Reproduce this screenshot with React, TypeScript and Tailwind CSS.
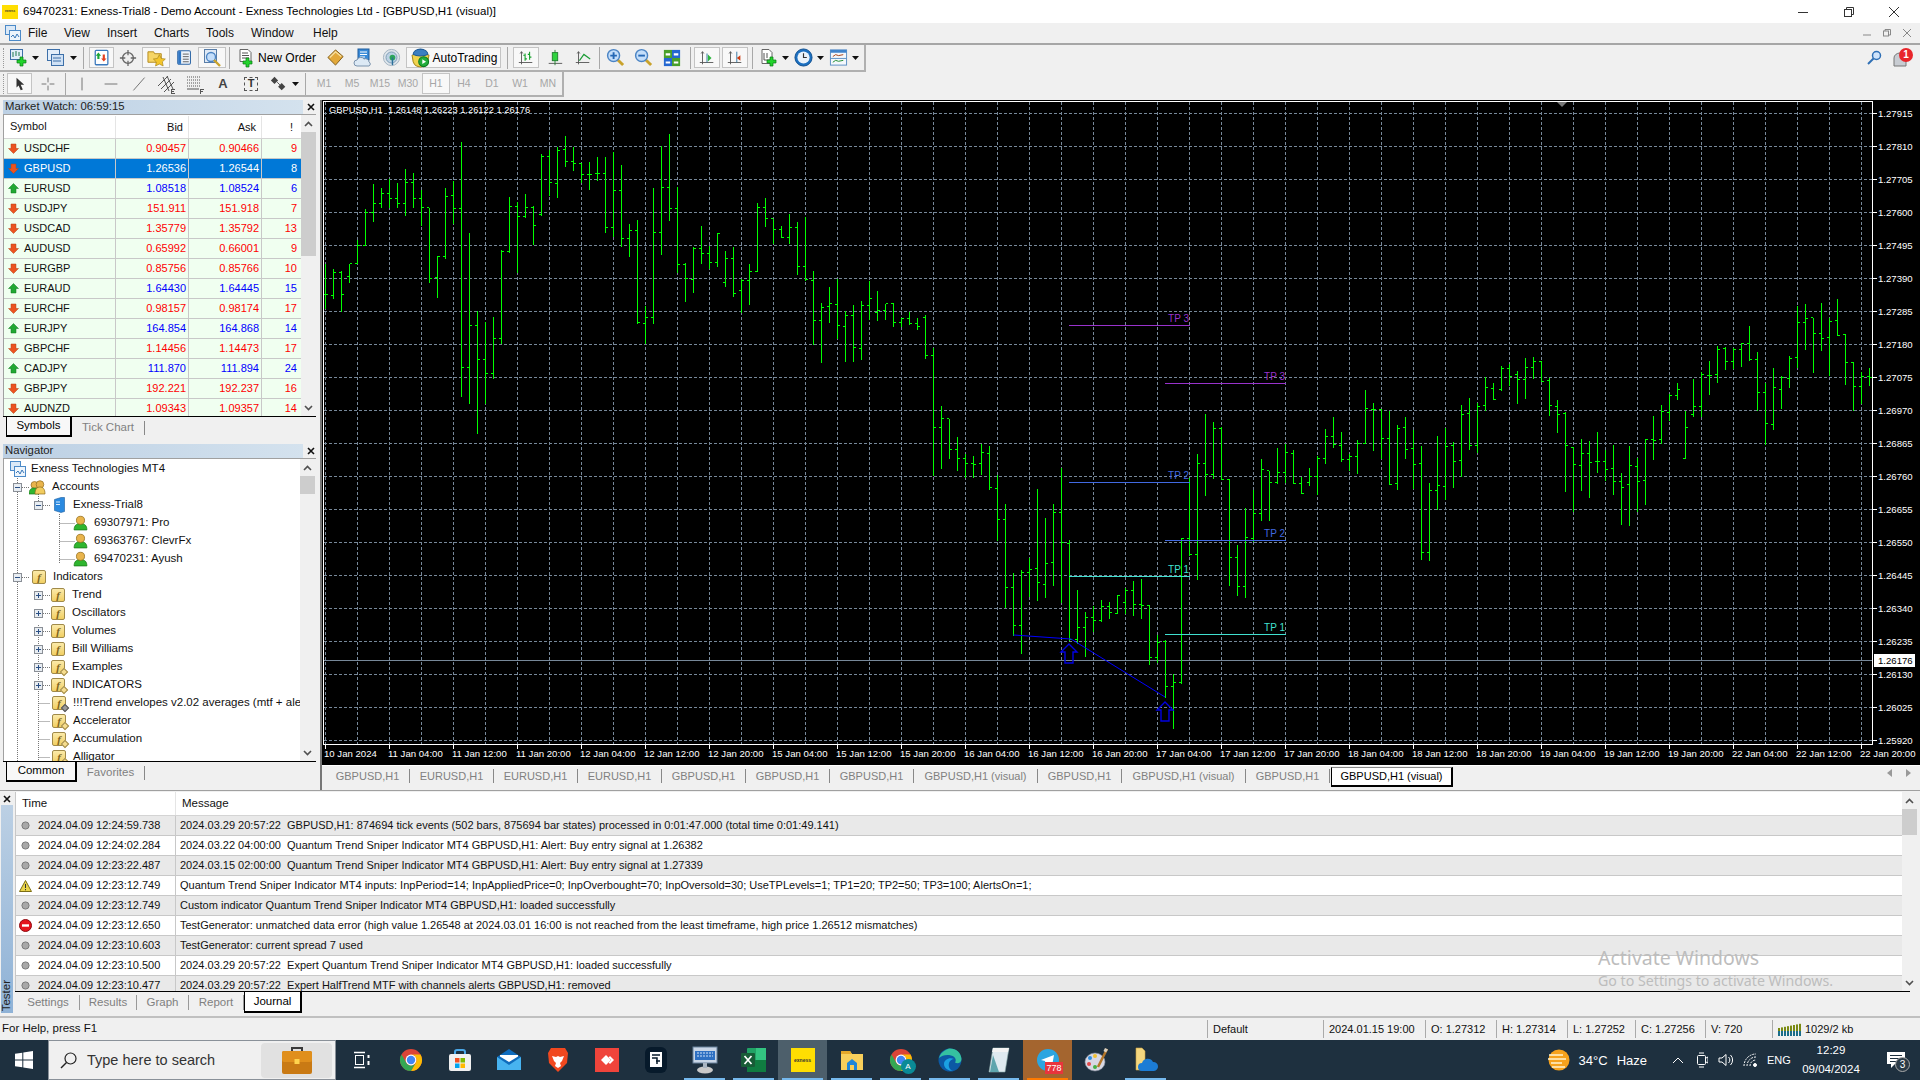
import React from "react";

type N = number[];
const seg1: N[] = [[520,655,612,612],[535,625,615,545],[540,662,545,612],[518,575,558,518],[448,520,518,466],[355,466,466,365],[280,392,365,338],[292,350,338,308],[265,350,310,325],[276,352,325,338],[235,376,340,277],[247,352,277,325],[298,404,325,352],[350,575,350,565],[496,620,562,498],[292,505,498,318],[270,400,316,355],[153,917,355,832],[427,938,832,705],[660,1030,705,807],[694,940,807,850],[678,865,848,745],[478,760,745,483],[318,485,483,347],[333,545,347,378],[310,382,378,350],[345,462,350,406],[190,375,372,197],[178,315,197,275],[168,320,280,180],[135,228,178,214],[168,240,214,220],[215,275,220,253],[213,297,253,253],[198,270,250,250],[198,425,248,410],[183,437,410,300],[222,468,300,445],[400,497,445,420],[388,700,420,697],[645,760,700,680],[292,700,680,427],[166,492,427,290],[130,390,290,355],[287,545,355,523],[515,632,523,565],[467,605,567,475],[405,518,475,490],[465,533,490,515],[425,528,515,430],[480,587,575,505],[468,618,505,610],[565,667,600,570],[520,642,570,543],[337,543,543,350],[320,408,350,385],[385,458,385,417],[405,442,417,440],[368,458,440,412],[393,552,412,527],[377,570,527,567],[541,763,570,690],[636,815,690,650],[588,695,648,640],[565,743,642,705],[660,813,708,675],[643,813,675,772],[630,808,775,645],[570,688,645,625],[600,690,665,660],[640,687,660,640],[637,708,640,695],[680,708,695,685],[664,702,685,698],[682,718,700,708],[672,803,680,795],[772,1155,795,1010],[945,1135,1012,985],[985,1103,985,1078],[1038,1140,1078,1105],[1090,1160,1105,1120],[1095,1160,1120,1123],[1060,1152,1120,1085],[1066,1198,1090,1190],[1152,1350,1195,1287]];
const seg2: N[] = [[610,920,658,862],[817,1005,862,975],[808,1060,975,815],[772,887,815,808],[565,900,805,847],[652,890,853,790],[610,855,787,635],[502,905,635,727],[718,1020,730,1018],[868,1030,1018,980],[932,1067,980,952],[915,993,952,960],[898,962,960,918],[903,953,918,935],[882,938,938,885],[862,940,905,870],[840,945,870,912],[835,953,912,915],[912,1093,915,1070],[1002,1085,1070,1025],[1018,1190,1022,1157],[1118,1283,1157,1147],[710,1148,1147,715],[530,765,715,762],[460,838,762,488],[340,585,488,522],[363,533,522,384],[378,538,384,537],[535,855,537,772],[733,885,772,857],[622,890,857,710],[568,722,714,640],[475,660,640,508],[510,660,510,547],[442,548,547,515],[430,545,515,455],[447,548,458,548],[528,580,548,580],[502,555,545,527],[465,582,527,475],[385,488,475,407],[348,440,407,432],[393,482,435,477],[460,510,477,468],[418,518,468,428],[267,430,428,325],[305,450,328,328],[323,473,328,415],[330,553,415,552],[372,567,550,384]];
const seg3: N[] = [[348,473,382,448],[388,563,445,492],[435,777,490,757],[546,780,757,570],[405,628,571,555],[380,598,558,438],[423,560,436,484],[312,528,481,343],[292,446,340,436],[307,455,436,318],[228,330,316,262],[246,298,265,298],[195,270,266,205],[190,255,203,227],[210,308,223,238],[170,293,238,202],[168,233,202,184],[180,244,184,242],[232,345,240,316],[297,395,318,343],[333,573,338,436],[437,634,440,493],[414,569,496,460],[420,590,460,487],[393,515,484,484],[448,540,484,508],[432,581,505,544],[517,671,544,560],[435,675,553,496],[470,634,498,544],[414,611,541,418],[345,476,418,421],[312,429,418,334],[280,361,337,286],[247,298,286,268],[331,475,475,382],[234,347,341,319],[214,347,317,223],[181,281,225,226],[136,245,223,148]];
const seg4: N[] = [[198,267,205,243],[202,263,243,207],[187,257,207,190],[135,240,190,238],[213,390,238,337],[306,492,337,430],[262,448,432,322],[285,383,327,292],[226,320,295,234],[75,262,232,127],[70,208,127,115],[112,275,112,160],[67,210,160,175],[112,285,172,124],[55,166,120,165],[160,312,162,247],[243,390,247,319],[272,370,319,289],[262,315,287,290]];

const toBars = (s: N[], o: number) => s.map((b) => b.map((v) => o + v / 3));
const bars = [...toBars(seg1, 90), ...toBars(seg2, 300), ...toBars(seg3, 300), ...toBars(seg4, 280)];
const px = (v: number) => Math.round(v) + 0.5;
const barPath = bars
  .map((b, i) => {
    const n = Math.round(325.4 + 8 * i);
    const x = n + 0.5;
    return `M${x} ${px(b[0])}V${px(b[1])}M${n - 2} ${px(b[2])}H${n}M${n + 1} ${px(b[3])}H${n + 3}`;
  })
  .join("");
const hLevels = Array.from({ length: 20 }, (_, i) => ({ y: px(113.3 + 33 * i), t: (1.27915 - 0.00105 * i).toFixed(5) }));
const vGrid = Array.from({ length: 49 }, (_, i) => 325.5 + 32 * i);
const timeLabels = ["10 Jan 2024","11 Jan 04:00","11 Jan 12:00","11 Jan 20:00","12 Jan 04:00","12 Jan 12:00","12 Jan 20:00","15 Jan 04:00","15 Jan 12:00","15 Jan 20:00","16 Jan 04:00","16 Jan 12:00","16 Jan 20:00","17 Jan 04:00","17 Jan 12:00","17 Jan 20:00","18 Jan 04:00","18 Jan 12:00","18 Jan 20:00","19 Jan 04:00","19 Jan 12:00","19 Jan 20:00","22 Jan 04:00","22 Jan 12:00","22 Jan 20:00"];

const arrow = (x: number, y: number) => `${x},${y} ${x + 8},${y + 8} ${x + 4},${y + 8} ${x + 4},${y + 19} ${x - 4},${y + 19} ${x - 4},${y + 8} ${x - 8},${y + 8}`;

function Chart() {
  const tp = [
    { x1: 1069, x2: 1190, items: [[325, "#9932cc", "TP 3"], [482, "#4169e1", "TP 2"], [576, "#40e0d0", "TP 1"]] },
    { x1: 1165, x2: 1286, items: [[383, "#9932cc", "TP 3"], [540, "#4169e1", "TP 2"], [634, "#40e0d0", "TP 1"]] },
  ] as { x1: number; x2: number; items: [number, string, string][] }[];
  return (
    <svg width={1598} height={665} viewBox="322 100 1598 665" className="block bg-black font-['Liberation_Sans',sans-serif]">
      <g stroke="#778899" strokeDasharray="3 2" shapeRendering="crispEdges">
        {hLevels.map((l) => <path key={l.y} d={`M324 ${l.y}H1873`} />)}
        {vGrid.map((x) => <path key={x} d={`M${x} 102V744`} />)}
      </g>
      <path d="M324 660.5H1873" stroke="#778899" shapeRendering="crispEdges" />
      <path d={barPath} stroke="#00ff00" fill="none" shapeRendering="crispEdges" />
      {tp.map((g) => g.items.map(([y, c, t]) => (
        <g key={`${g.x1}${y}`}>
          <path d={`M${g.x1} ${y + 0.5}H${g.x2}`} stroke={c} shapeRendering="crispEdges" />
          <text x={g.x2 - 1} y={y - 3} textAnchor="end" fontSize="10" fill={c}>{t}</text>
        </g>
      )))}
      <path d="M1013.5 635L1071 639L1165 697" stroke="#0000ff" fill="none" strokeWidth="1" />
      <polygon points={arrow(1069, 644)} fill="none" stroke="#0000e0" strokeWidth="1.4" />
      <polygon points={arrow(1165, 702)} fill="none" stroke="#0000e0" strokeWidth="1.4" />
      <rect x="323.5" y="101.5" width="1549" height="643" fill="none" stroke="#fff" shapeRendering="crispEdges" />
      <text x="329" y="113" fontSize="9.3" fill="#fff" xmlSpace="preserve">GBPUSD,H1  1.26148 1.26223 1.26122 1.26176</text>
      <polygon points="1557,102 1567,102 1562,107" fill="#777" />
      {hLevels.map((l) => (
        <g key={l.t}>
          <path d={`M1873 ${l.y}H1877`} stroke="#fff" shapeRendering="crispEdges" />
          <text x="1878" y={l.y + 3.5} fontSize="9.6" fill="#fff">{l.t}</text>
        </g>
      ))}
      <rect x="1874" y="654" width="41" height="13" fill="#fff" />
      <text x="1878" y="664" fontSize="9.6" fill="#000">1.26176</text>
      {timeLabels.map((t, i) => (
        <g key={t}>
          <path d={`M${1861.5 - 64 * (24 - i)} 745V749`} stroke="#fff" shapeRendering="crispEdges" />
          <text x={1860 - 64 * (24 - i)} y="757" fontSize="9.6" fill="#fff">{t}</text>
        </g>
      ))}
    </svg>
  );
}

type P = { children?: React.ReactNode; w?: number; h?: number; vb?: string; className?: string };
const S = ({ children, w = 18, h = 18, vb = "0 0 20 20", className }: P) => (
  <svg width={w} height={h} viewBox={vb} className={className}>{children}</svg>
);
const Plus = ({ x, y }: { x: number; y: number }) => (
  <path transform={`translate(${x} ${y})`} d="M3 0h3v3h3v3H6v3H3V6H0V3h3z" fill="#22d32c" stroke="#0a7a14" strokeWidth=".7" />
);
const Axes = () => <path d="M5 3v14M2 15h15M3.5 5L5 3l1.5 2" stroke="#555" fill="none" />;
const Lens = ({ c }: { c: string }) => (
  <>
    <path d="M12 12l6 6" stroke="#c9a22b" strokeWidth="3" />
    <circle cx="8" cy="8" r="6.3" fill="#c4defa" stroke="#4b84c4" strokeWidth="1.5" />
    <path d={c} stroke="#2568b5" strokeWidth="2" />
  </>
);

const Ic = {
  NewChart: () => <S w={20} h={20}><rect x="1.5" y="1.5" width="12" height="10" fill="#e3eefa" stroke="#3d6fa8" /><path d="M4 4v5M7 3v5M10 4v4" stroke="#1d7a4d" /><Plus x={8} y={9} /></S>,
  Profiles: () => <S w={20} h={20}><rect x="1.5" y="1.5" width="12" height="11" fill="#e3eefa" stroke="#3d6fa8" /><rect x="5.5" y="6.5" width="12" height="11" fill="#cfe1f5" stroke="#3d6fa8" /><path d="M7 10h8M7 13h8" stroke="#3d6fa8" /></S>,
  Market: () => <S w={18} h={18}><rect x="2.5" y="1.5" width="14" height="16" rx="1" fill="#fff" stroke="#3b79bd" strokeWidth="1.4" /><path d="M6 4l3 3.5H7.2V11H4.8V7.5H3z" fill="#1aa53a" /><path d="M12 14l-3-3.5h1.8V6h2.4v4.5H15z" fill="#e4401f" /></S>,
  Data: () => <S w={18} h={18}><circle cx="10" cy="10" r="6" fill="none" stroke="#666" strokeWidth="1.5" /><path d="M10 1v6M10 13v6M1 10h6M13 10h6" stroke="#666" strokeWidth="1.4" /></S>,
  Nav: () => <S w={19} h={19}><path d="M1 4h6l1 2h7v9H1z" fill="#f6d565" stroke="#b38a1e" /><path d="M13 7l2 4 4.3.6-3.1 3 .8 4.3-4-2-4 2 .8-4.3-3.1-3 4.3-.6z" fill="#f3c52b" stroke="#a8841a" strokeWidth=".7" /></S>,
  Term: () => <S w={17} h={17}><rect x="2" y="2" width="15" height="16" rx="1.5" fill="#eef4fb" stroke="#2d66a6" strokeWidth="1.2" /><rect x="2.5" y="2.5" width="3.5" height="15" fill="#2f76c4" /><path d="M8 6h7M8 9h7M8 12h7M8 15h7" stroke="#4a4a4a" /></S>,
  Tester: () => <S w={20} h={20}><rect x="2.5" y="1.5" width="12" height="13" fill="#dfe9f5" stroke="#5a7ea8" /><circle cx="9" cy="9" r="4.5" fill="#c4defa" stroke="#4b84c4" strokeWidth="1.3" /><path d="M12 12l6 6" stroke="#c9a22b" strokeWidth="2.4" /></S>,
  Order: () => <S w={20} h={20} className="shrink-0"><path d="M3 1.5h8l3 3v9H3z" fill="#fff" stroke="#666" /><path d="M5 5h6M5 7.5h7M5 10h7" stroke="#555" /><Plus x={6} y={10} /></S>,
  Book: () => <S w={19} h={19}><path d="M2 10L10 2l8 7-8 9z" fill="#e2a83a" stroke="#7c5a17" /><path d="M4 10l6-6 6 5" fill="none" stroke="#f8e1a2" strokeWidth="1.4" /></S>,
  Editor: () => <S w={20} h={20}><rect x="5" y="1" width="11" height="11" fill="#3a8bd8" stroke="#1f5c9c" /><path d="M7 4h7M7 6.5h7M7 9h5" stroke="#fff" /><path d="M4 18a3 3 0 0 1 0-6 4 4 0 0 1 7-1 3.5 3.5 0 0 1 5 3 2.2 2.2 0 0 1 0 4z" fill="#dce9f5" stroke="#7b93ad" /></S>,
  Signal: () => <S w={19} h={19}><circle cx="10" cy="10" r="8.5" fill="#dfe6ec" stroke="#9fb0bf" /><circle cx="10" cy="10" r="5.8" fill="#bcd2e4" stroke="#7c9ab3" /><circle cx="11" cy="10" r="3" fill="#2ca45a" /><path d="M11 10v8" stroke="#2a6f99" strokeWidth="1.5" /></S>,
  Auto: () => <S w={21} h={21}><path d="M2 8l8-4 8 4-1 6c-1 3-4 5-7 5s-6-2-7-5z" fill="#f0d34e" stroke="#a98a1c" /><path d="M3 7a7 5 0 0 1 14 0c-3 2-11 2-14 0z" fill="#3c7fc1" stroke="#1f5b96" /><circle cx="13" cy="14" r="4.7" fill="#23ad3c" stroke="#0d7b21" /><path d="M11.7 11.7l3.6 2.3-3.6 2.3z" fill="#fff" /></S>,
  Bars: () => <S w={18} h={18}><Axes /><path d="M9 5v8M7 7h2M9 11h2M14 3v9M12 6h2M14 9h2" stroke="#14a02a" strokeWidth="1.2" fill="none" /></S>,
  Candle: () => <S w={18} h={18}><path d="M3 16h15" stroke="#555" /><path d="M10 1v17" stroke="#1f7e2c" /><rect x="7" y="4" width="6" height="9" fill="#2fd33e" stroke="#1f7e2c" /></S>,
  Line: () => <S w={18} h={18}><Axes /><path d="M6 13l5-7 7 5" stroke="#1b9c35" strokeWidth="1.3" fill="none" /></S>,
  ZoomIn: () => <S w={19} h={19}><Lens c="M4.5 8h7M8 4.5v7" /></S>,
  ZoomOut: () => <S w={19} h={19}><Lens c="M4.5 8h7" /></S>,
  Tile: () => <S w={18} h={18}><rect x="1" y="1" width="9" height="9" fill="#49a02a" /><rect x="10" y="1" width="9" height="9" fill="#2467d0" /><rect x="1" y="10" width="9" height="9" fill="#2467d0" /><rect x="10" y="10" width="9" height="9" fill="#49a02a" /><path d="M3 6h5M12 6h5M3 15h5M12 15h5" stroke="#fff" strokeWidth="2.4" /></S>,
  Scroll: () => <S w={18} h={18}><Axes /><path d="M10 5v10" stroke="#2b6f9e" /><path d="M11 6l4 4-4 4z" fill="#2bb53c" /></S>,
  Shift: () => <S w={18} h={18}><Axes /><path d="M12 3v12" stroke="#2b6f9e" /><path d="M16 7v6l-4-3z" fill="#cc3c12" /></S>,
  Tmpl: () => <S w={20} h={20}><path d="M3 1.5h7l3 3v11H3z" fill="#fff" stroke="#666" /><path d="M5 5v7h6M8 5v5" stroke="#555" fill="none" /><Plus x={8} y={9} /></S>,
  Clock: () => <S w={19} h={19}><circle cx="10" cy="10" r="9" fill="#1b6fc0" stroke="#0d4d8d" /><circle cx="10" cy="10" r="6.4" fill="#eaf3fb" /><path d="M10 5.5V10h3.5" stroke="#333" fill="none" strokeWidth="1.2" /></S>,
  Ind: () => <S w={19} h={19}><rect x="1.5" y="2" width="17" height="16" fill="#f4f8fc" stroke="#5a8ec4" /><rect x="1.5" y="2" width="17" height="3" fill="#3f84cc" /><path d="M1.5 11h17" stroke="#5a8ec4" /><path d="M4 9l3-2 3 1 5-1" stroke="#a33c10" fill="none" /><path d="M4 15l3-2 3 1 5-1" stroke="#1d8c2e" fill="none" /></S>,
  Drop: () => <svg width={7} height={4} viewBox="0 0 7 4"><path d="M0 0h7L3.5 4z" fill="#111" /></svg>,
};

const Cell = ({ className, pressed, children }: { className: string; pressed?: boolean; children?: React.ReactNode }) => (
  <div className={`${className} flex h-full shrink-0 items-center justify-center ${pressed ? "border border-[#c4c4c4] bg-[#f8f8f8]" : ""}`}>{children}</div>
);
const Sep = () => <div className="mx-auto h-[22px] w-px bg-[#a8a8a8]" />;
const Grip = () => <div className="h-[20px] w-[2px] border-l border-dotted border-[#999]" />;

function Toolbar1() {
  return (
    <div className="flex h-[29px] border-t-2 border-[#a6a6a6] bg-[#f0f0f0] text-[12px] text-black">
      <div className="flex h-[27px] w-[866px] items-center overflow-hidden border-r-2 border-b-2 border-[#b0b0b0] py-[2px]">
        <Cell className="w-[7px]"><Grip /></Cell>
        <Cell className="w-[24px]"><Ic.NewChart /></Cell>
        <Cell className="w-[9px]"><Ic.Drop /></Cell>
        <Cell className="w-[4px]" />
        <Cell className="w-[24px]"><Ic.Profiles /></Cell>
        <Cell className="w-[10px]"><Ic.Drop /></Cell>
        <Cell className="w-[10px]"><Sep /></Cell>
        <Cell className="ml-[1px] w-[25px]" pressed><Ic.Market /></Cell>
        <Cell className="w-[28px]"><Ic.Data /></Cell>
        <Cell className="w-[28px]" pressed><Ic.Nav /></Cell>
        <Cell className="w-[28px]"><Ic.Term /></Cell>
        <Cell className="w-[28px]" pressed><Ic.Tester /></Cell>
        <Cell className="w-[6px]"><Sep /></Cell>
        <Cell className="w-[89px] justify-start pl-[5px]"><div className="flex items-center gap-[1px]"><Ic.Order /><span>New Order</span></div></Cell>
        <Cell className="w-[28px]"><Ic.Book /></Cell>
        <Cell className="w-[28px]"><Ic.Editor /></Cell>
        <Cell className="w-[28px]"><Ic.Signal /></Cell>
        <Cell className="ml-[1px] w-[95px] gap-[2px]" pressed><Ic.Auto /><span>AutoTrading</span></Cell>
        <Cell className="w-[12px]"><Sep /></Cell>
        <Cell className="w-[26px]" pressed><Ic.Bars /></Cell>
        <Cell className="ml-[2px] w-[28px]"><Ic.Candle /></Cell>
        <Cell className="w-[28px]"><Ic.Line /></Cell>
        <Cell className="w-[4px]"><Sep /></Cell>
        <Cell className="w-[28px]"><Ic.ZoomIn /></Cell>
        <Cell className="w-[29px]"><Ic.ZoomOut /></Cell>
        <Cell className="w-[28px]"><Ic.Tile /></Cell>
        <Cell className="w-[8px]"><Sep /></Cell>
        <Cell className="w-[26px]" pressed><Ic.Scroll /></Cell>
        <Cell className="ml-[2px] w-[26px]" pressed><Ic.Shift /></Cell>
        <Cell className="w-[9px]"><Sep /></Cell>
        <Cell className="w-[24px]"><Ic.Tmpl /></Cell>
        <Cell className="w-[9px]"><Ic.Drop /></Cell>
        <Cell className="w-[26px]"><Ic.Clock /></Cell>
        <Cell className="w-[9px]"><Ic.Drop /></Cell>
        <Cell className="w-[26px]"><Ic.Ind /></Cell>
        <Cell className="w-[8px]"><Ic.Drop /></Cell>
      </div>
    </div>
  );
}

const g2 = "#555";
function Toolbar2() {
  const periods = ["M1", "M5", "M15", "M30", "H1", "H4", "D1", "W1", "MN"];
  return (
    <div className="flex h-[26px] bg-[#f0f0f0]">
      <div className="flex h-[25px] w-[564px] items-center border-r-2 border-b-2 border-[#b0b0b0] py-[1px]">
        <Cell className="w-[7px]"><Grip /></Cell>
        <Cell className="w-[25px]" pressed><S w={14} h={18}><path d="M5 1l11 10h-5l3 7-3 1-3-7-3 3z" fill="#333" /></S></Cell>
        <Cell className="ml-[2px] w-[28px]"><S w={16} h={16}><path d="M10 2v6M10 12v6M2 10h6M12 10h6" stroke={g2} /></S></Cell>
        <Cell className="w-[6px]"><Sep /></Cell>
        <Cell className="w-[28px]"><S w={16} h={16}><path d="M10 2v16" stroke={g2} /></S></Cell>
        <Cell className="w-[29px]"><S w={16} h={16}><path d="M2 10h16" stroke={g2} /></S></Cell>
        <Cell className="w-[28px]"><S w={16} h={16}><path d="M3 18L17 2" stroke={g2} /></S></Cell>
        <Cell className="w-[28px]"><S w={20} h={20}><path d="M1 12L11 2M4 15L14 5M7 18L17 8M6 3l6 14M10 2l6 13" stroke={g2} fill="none" /><path d="M14 15h4v1h-3v1h2v1h-2v1h3v1h-4z" fill={g2} /></S></Cell>
        <Cell className="w-[28px]"><S w={20} h={20}><path d="M2 3h14M2 6h14M2 9h14M2 12h14" stroke={g2} strokeDasharray="1 1" /><path d="M2 15h12" stroke={g2} /><path d="M15 15h4v1h-3v1h2v1h-2v2h-1z" fill={g2} /></S></Cell>
        <Cell className="w-[28px] text-[13px] font-semibold text-[#444]">A</Cell>
        <Cell className="w-[28px]"><div className="flex h-[14px] w-[14px] items-center justify-center border border-dashed border-[#555] text-[11px] font-semibold leading-none text-[#333]">T</div></Cell>
        <Cell className="ml-[3px] w-[22px]"><S w={18} h={18}><path d="M5 2l4 4-4 4-4-4zM13 9l4 4-4 4-4-4z" fill="#444" /><path d="M8 8l3 3" stroke="#444" /></S></Cell>
        <Cell className="w-[10px]"><Ic.Drop /></Cell>
        <Cell className="w-[10px]"><Sep /></Cell>
        {periods.map((p) => (
          <Cell key={p} className="w-[28px] text-[10.5px] text-[#a6a6a6]" pressed={p === "H1"}>{p}</Cell>
        ))}
      </div>
    </div>
  );
}

const Arrow = ({ up }: { up?: boolean }) => (
  <svg width={11} height={11} viewBox="0 0 11 11" className="shrink-0">
    <path d={up ? "M5.5 .5L10.5 5.5H8V10H3V5.5H.5z" : "M5.5 10.5L10.5 5.5H8V1H3V5.5H.5z"} fill={up ? "#22a834" : "#ec5320"} stroke={up ? "#0f7a1e" : "#b24418"} strokeWidth=".5" />
  </svg>
);
const Chev = ({ up }: { up?: boolean }) => (
  <svg width={9} height={6} viewBox="0 0 9 6"><path d={up ? "M1 5l3.5-3.5L8 5" : "M1 1l3.5 3.5L8 1"} stroke="#505050" strokeWidth="1.6" fill="none" /></svg>
);
const VBar = ({ thumb, track }: { thumb: string; track: string }) => (
  <div className={`flex w-[15px] flex-col bg-[#f0f0f0] ${track}`}>
    <div className="flex h-[17px] items-center justify-center"><Chev up /></div>
    <div className="flex-1"><div className={`w-full bg-[#cdcdcd] ${thumb}`} /></div>
    <div className="flex h-[17px] items-center justify-center"><Chev /></div>
  </div>
);
const CloseX = () => (
  <svg width={8} height={8} viewBox="0 0 8 8"><path d="M1 1l6 6M7 1L1 7" stroke="#111" strokeWidth="1.6" /></svg>
);
const PanelTitle = ({ t }: { t: string }) => (
  <div className="flex h-[14px] items-center">
    <div className="flex h-full w-[300px] items-center bg-gradient-to-r from-[#bcd0e4] to-[#d4e2ee] pl-[2px] text-[11.3px] leading-none text-[#222]">{t}</div>
    <div className="flex w-[16px] justify-center"><CloseX /></div>
  </div>
);
const Tabs = ({ active, activeW, rest, restW }: { active: string; activeW: string; rest: string; restW: string }) => (
  <div className="flex h-[20px] border-t border-black text-[11.5px] leading-none">
    <div className={`ml-[3px] flex h-[20px] items-center justify-center border-x border-b-2 border-black border-r-2 bg-[#f8f8f8] text-black ${activeW}`}>{active}</div>
    <div className={`mt-[4px] flex h-[14px] items-center justify-center border-r border-[#888] text-[#808080] ${restW}`}>{rest}</div>
  </div>
);

const mw: [string, string, string, string, boolean][] = [
  ["USDCHF","0.90457","0.90466","9",false],["GBPUSD","1.26536","1.26544","8",false],["EURUSD","1.08518","1.08524","6",true],["USDJPY","151.911","151.918","7",false],["USDCAD","1.35779","1.35792","13",false],["AUDUSD","0.65992","0.66001","9",false],["EURGBP","0.85756","0.85766","10",false],["EURAUD","1.64430","1.64445","15",true],["EURCHF","0.98157","0.98174","17",false],["EURJPY","164.854","164.868","14",true],["GBPCHF","1.14456","1.14473","17",false],["CADJPY","111.870","111.894","24",true],["GBPJPY","192.221","192.237","16",false],["AUDNZD","1.09343","1.09357","14",false],
];

function MarketWatch() {
  return (
    <section className="h-[341px] pl-[3px]">
      <PanelTitle t="Market Watch: 06:59:15" />
      <div className="flex h-[302px] w-[313px] border-t border-l border-[#a0a0a0]">
        <div className="h-full w-[297px] overflow-hidden bg-white text-[11px] leading-none">
          <div className="grid h-[24px] grid-cols-[111px_73px_73px_40px] items-center border-b border-[#d4d4d4] text-[#111]">
            <div className="pl-[6px]">Symbol</div>
            <div className="border-l border-[#e5e5e5] pr-[5px] text-right leading-[22px]">Bid</div>
            <div className="border-l border-[#e5e5e5] pr-[5px] text-right leading-[22px]">Ask</div>
            <div className="border-l border-[#e5e5e5] pr-[8px] text-right leading-[22px]">!</div>
          </div>
          {mw.map(([s, b, a, n, up]) => {
            const sel = s === "GBPUSD";
            const col = sel ? "text-white" : up ? "text-[#0000ff]" : "text-[#ff0000]";
            return (
              <div key={s} className={`grid h-[20px] grid-cols-[111px_73px_73px_40px] border-b border-[#c8c8c8] ${sel ? "bg-[#0078d7]" : "bg-[#f0fff0]"}`}>
                <div className={`flex items-center gap-[5px] pl-[4px] ${sel ? "text-white" : "text-[#111]"}`}><Arrow up={up} />{s}</div>
                <div className={`flex items-center justify-end border-l border-[#c8c8c8] pr-[2px] ${col}`}>{b}</div>
                <div className={`flex items-center justify-end border-l border-[#c8c8c8] pr-[2px] ${col}`}>{a}</div>
                <div className={`flex items-center justify-end border-l border-[#c8c8c8] pr-[4px] ${col}`}>{n}</div>
              </div>
            );
          })}
        </div>
        <VBar track="h-full" thumb="mt-0 h-[124px]" />
      </div>
      <div className="w-[313px]"><Tabs active="Symbols" activeW="w-[66px]" rest="Tick Chart" restW="w-[73px]" /></div>
    </section>
  );
}

const Box = ({ minus }: { minus?: boolean }) => (
  <svg width={9} height={9} viewBox="0 0 9 9" className="shrink-0">
    <rect x=".5" y=".5" width="8" height="8" fill="#e8edf2" stroke="#8a8f96" />
    <path d={minus ? "M2 4.5h5" : "M2 4.5h5M4.5 2v5"} stroke="#2a4f85" />
  </svg>
);
const User = () => (
  <svg width={15} height={16} viewBox="0 0 14 15" className="shrink-0">
    <path d="M1 14c0-4 2-6 6-6s6 2 6 6z" fill="#2fb52f" stroke="#1a7a1a" strokeWidth=".7" />
    <circle cx="7" cy="5" r="3.8" fill="#e9b44c" stroke="#8f6a1a" strokeWidth=".7" />
  </svg>
);
const Users = () => (
  <svg width={17} height={15} viewBox="0 0 17 15" className="shrink-0">
    <circle cx="5.5" cy="5" r="3.5" fill="#e9b44c" stroke="#8f6a1a" strokeWidth=".7" />
    <path d="M0 14c0-4 2-6 5-6s5 2 5 6z" fill="#2fb52f" stroke="#1a7a1a" strokeWidth=".7" />
    <circle cx="11" cy="4.5" r="3.8" fill="#e9b44c" stroke="#8f6a1a" strokeWidth=".7" />
    <path d="M6 14c0-5 2-7 5-7s5 2 5 7z" fill="#f1cc5f" stroke="#8f6a1a" strokeWidth=".7" />
  </svg>
);
const Server = () => (
  <svg width={11} height={16} viewBox="0 0 11 16" className="shrink-0">
    <path d="M.5 2.5L7 .5h3.5v14L7 15.5.5 13.5z" fill="#2b8ae0" stroke="#1b5c9c" strokeWidth=".6" />
    <path d="M2 5h4M2 7.5h4" stroke="#d7ecff" />
  </svg>
);
const Fx = ({ d }: { d?: "gold" | "gray" }) => (
  <div className="relative flex h-[14px] w-[14px] shrink-0 items-center justify-center rounded-[2px] border border-[#a08a4a] bg-gradient-to-b from-[#fbeaa8] to-[#f1cf62] font-['Liberation_Serif',serif] text-[11px] font-bold italic leading-none text-[#7d6420]">
    f
    {d && <div className={`absolute -right-[3px] -bottom-[2px] h-[6px] w-[6px] rotate-45 border ${d === "gold" ? "border-[#a08a4a] bg-[#f6dd8e]" : "border-[#555] bg-[#999]"}`} />}
  </div>
);
const MT = ({ w = 16 }: { w?: number }) => (
  <svg width={w} height={w} viewBox="0 0 16 16" className="shrink-0">
    <rect x=".5" y=".5" width="10" height="9" fill="#dbe9f7" stroke="#4c8ac8" />
    <rect x="4.5" y="5.5" width="11" height="10" fill="#eef5fc" stroke="#4c8ac8" />
    <path d="M6 12l2-2 2 3 2-4 2 3" stroke="#3a78b8" fill="none" />
  </svg>
);

type Row = { t: string; ml: string; box?: "plus" | "minus"; icon: React.ReactNode; gap: string };
const tree: Row[] = [
  { t: "Exness Technologies MT4", ml: "ml-[6px]", icon: <MT />, gap: "ml-[5px]" },
  { t: "Accounts", ml: "ml-[9px]", box: "minus", icon: <Users />, gap: "ml-[6px]" },
  { t: "Exness-Trial8", ml: "ml-[30px]", box: "minus", icon: <Server />, gap: "ml-[8px]" },
  { t: "69307971: Pro", ml: "ml-[69px]", icon: <User />, gap: "ml-[6px]" },
  { t: "69363767: ClevrFx", ml: "ml-[69px]", icon: <User />, gap: "ml-[6px]" },
  { t: "69470231: Ayush", ml: "ml-[69px]", icon: <User />, gap: "ml-[6px]" },
  { t: "Indicators", ml: "ml-[9px]", box: "minus", icon: <Fx />, gap: "ml-[7px]" },
  { t: "Trend", ml: "ml-[30px]", box: "plus", icon: <Fx />, gap: "ml-[7px]" },
  { t: "Oscillators", ml: "ml-[30px]", box: "plus", icon: <Fx />, gap: "ml-[7px]" },
  { t: "Volumes", ml: "ml-[30px]", box: "plus", icon: <Fx />, gap: "ml-[7px]" },
  { t: "Bill Williams", ml: "ml-[30px]", box: "plus", icon: <Fx />, gap: "ml-[7px]" },
  { t: "Examples", ml: "ml-[30px]", box: "plus", icon: <Fx d="gold" />, gap: "ml-[7px]" },
  { t: "INDICATORS", ml: "ml-[30px]", box: "plus", icon: <Fx d="gold" />, gap: "ml-[7px]" },
  { t: "!!!Trend envelopes v2.02 averages (mtf + alerts)", ml: "ml-[48px]", icon: <Fx d="gray" />, gap: "ml-[7px]" },
  { t: "Accelerator", ml: "ml-[48px]", icon: <Fx d="gold" />, gap: "ml-[7px]" },
  { t: "Accumulation", ml: "ml-[48px]", icon: <Fx d="gold" />, gap: "ml-[7px]" },
  { t: "Alligator", ml: "ml-[48px]", icon: <Fx d="gold" />, gap: "ml-[7px]" },
];

function Navigator() {
  return (
    <section className="h-[346px] pl-[3px]">
      <div className="h-[3px]" />
      <PanelTitle t="Navigator" />
      <div className="flex h-[303px] w-[313px] border-t border-l border-[#a0a0a0]">
        <div className="relative h-full w-[296px] overflow-hidden bg-white pt-[1px] text-[11.5px] leading-none text-[#111]">
          <svg width={296} height={302} viewBox="4 459 296 302" className="absolute top-0 left-0">
            <path d="M17.5 478V761M38.5 492V505M38.5 625V761M59.5 514V564M22 487.5h7M43 505.5h7M59.5 523.5h16M59.5 541.5h16M59.5 559.5h16M22 577.5h7M43 595.5h7M43 613.5h7M43 631.5h7M43 649.5h7M43 667.5h7M43 685.5h7M38.5 703.5h12M38.5 721.5h12M38.5 739.5h12M38.5 757.5h12" stroke="#777" strokeDasharray="1 1" fill="none" />
          </svg>
          {tree.map((r) => (
            <div key={r.t} className="relative flex h-[18px] items-center whitespace-nowrap">
              <div className={`flex items-center ${r.ml}`}>
                {r.box && <Box minus={r.box === "minus"} />}
                {r.box && <div className={r.t === "Accounts" ? "w-[7px]" : r.t === "Exness-Trial8" ? "w-[11px]" : r.t === "Indicators" ? "w-[10px]" : "w-[8px]"} />}
                {r.icon}
              </div>
              <span className={r.gap}>{r.t}</span>
            </div>
          ))}
        </div>
        <VBar track="h-full" thumb="h-[18px]" />
      </div>
      <div className="w-[313px]"><Tabs active="Common" activeW="w-[71px]" rest="Favorites" restW="w-[68px]" /></div>
    </section>
  );
}

const chartTabs: [string, string][] = [["GBPUSD,H1","w-[84px]"],["EURUSD,H1","w-[84px]"],["EURUSD,H1","w-[84px]"],["EURUSD,H1","w-[84px]"],["GBPUSD,H1","w-[84px]"],["GBPUSD,H1","w-[84px]"],["GBPUSD,H1","w-[84px]"],["GBPUSD,H1 (visual)","w-[124px]"],["GBPUSD,H1","w-[84px]"],["GBPUSD,H1 (visual)","w-[124px]"],["GBPUSD,H1","w-[84px]"]];
function ChartTabs() {
  return (
    <div className="flex h-[25px] items-start border-t border-white bg-[#f0f0f0] pt-[3px] text-[11px] leading-none text-[#808080]">
      <div className="w-[4px]" />
      {chartTabs.map(([t, w], i) => (
        <div key={i} className={`flex h-[14px] items-center justify-center border-r border-[#888] ${w}`}>{t}</div>
      ))}
      <div className="-mt-[2px] ml-[1px] flex h-[20px] w-[122px] items-center justify-center border-x border-b-2 border-black border-r-2 border-t border-t-[#888] bg-white text-black">GBPUSD,H1 (visual)</div>
      <div className="ml-auto mr-[9px] flex items-center gap-[14px]">
        <svg width={5} height={8} viewBox="0 0 5 8"><path d="M5 0v8L0 4z" fill="#999" /></svg>
        <svg width={5} height={8} viewBox="0 0 5 8"><path d="M0 0v8l5-4z" fill="#999" /></svg>
      </div>
    </div>
  );
}

const logs: [string, string, string?][] = [
  ["2024.04.09 12:24:59.738","2024.03.29 20:57:22  GBPUSD,H1: 874694 tick events (502 bars, 875694 bar states) processed in 0:01:47.000 (total time 0:01:49.141)"],
  ["2024.04.09 12:24:02.284","2024.03.22 04:00:00  Quantum Trend Sniper Indicator MT4 GBPUSD,H1: Alert: Buy entry signal at 1.26382"],
  ["2024.04.09 12:23:22.487","2024.03.15 02:00:00  Quantum Trend Sniper Indicator MT4 GBPUSD,H1: Alert: Buy entry signal at 1.27339"],
  ["2024.04.09 12:23:12.749","Quantum Trend Sniper Indicator MT4 inputs: InpPeriod=14; InpAppliedPrice=0; InpOverbought=70; InpOversold=30; UseTPLevels=1; TP1=20; TP2=50; TP3=100; AlertsOn=1;","warn"],
  ["2024.04.09 12:23:12.749","Custom indicator Quantum Trend Sniper Indicator MT4 GBPUSD,H1: loaded successfully"],
  ["2024.04.09 12:23:12.650","TestGenerator: unmatched data error (high value 1.26548 at 2024.03.01 16:00 is not reached from the least timeframe, high price 1.26512 mismatches)","err"],
  ["2024.04.09 12:23:10.603","TestGenerator: current spread 7 used"],
  ["2024.04.09 12:23:10.500","2024.03.29 20:57:22  Expert Quantum Trend Sniper Indicator MT4 GBPUSD,H1: loaded successfully"],
  ["2024.04.09 12:23:10.477","2024.03.29 20:57:22  Expert HalfTrend MTF with channels alerts GBPUSD,H1: removed"],
];
const LogIcon = ({ k }: { k?: string }) =>
  k === "warn" ? (
    <svg width={13} height={12} viewBox="0 0 13 12"><path d="M6.5.5L12.5 11.5H.5z" fill="#e9d44a" stroke="#7c6d14" /><path d="M6.5 4v4M6.5 9v1.3" stroke="#333" /></svg>
  ) : k === "err" ? (
    <svg width={13} height={13} viewBox="0 0 13 13"><circle cx="6.5" cy="6.5" r="6" fill="#e5141d" stroke="#8f0a10" /><rect x="3" y="5.3" width="7" height="2.4" fill="#fff" /></svg>
  ) : (
    <svg width={9} height={9} viewBox="0 0 9 9"><circle cx="4.5" cy="4.5" r="3.6" fill="#a8a8a8" stroke="#7a7a7a" /></svg>
  );

function Tester() {
  const tabs = [["Settings", "w-[63px]"], ["Results", "w-[57px]"], ["Graph", "w-[52px]"], ["Report", "w-[55px]"]];
  return (
    <section className="relative flex h-[226px] border-t border-[#a0a0a0] bg-[#f0f0f0] pt-[1px]">
      <div className="flex w-[15px] flex-col pl-[1px]">
        <div className="flex h-[13px] items-center justify-center pr-[3px]"><CloseX /></div>
        <div className="flex h-[208px] w-[12px] items-end justify-center bg-gradient-to-b from-[#bcd0e4] to-[#8fb2d6] pb-[2px]">
          <span className="rotate-180 text-[11.5px] leading-none text-[#222] [writing-mode:vertical-rl]">Tester</span>
        </div>
      </div>
      <div className="flex-1">
        <div className="flex h-[199px] border-l border-[#c8c8c8]">
          <div className="w-[1886px] overflow-hidden bg-white text-[11px] leading-none text-[#111]">
            <div className="flex h-[24px] items-center border-b border-[#d4d4d4] text-[11.5px]">
              <div className="w-[159px] pl-[6px]">Time</div>
              <div className="flex h-full items-center border-l border-[#e5e5e5] pl-[6px]">Message</div>
            </div>
            {logs.map(([t, m, k], i) => (
              <div key={i} className={`flex h-[20px] items-center whitespace-pre border-b border-[#c8c8c8] ${i % 2 === 0 ? "bg-[#e9e9e9]" : "bg-white"}`}>
                <div className="flex w-[18px] justify-center"><LogIcon k={k} /></div>
                <div className="w-[141px] pl-[4px]">{t}</div>
                <div className="flex h-full items-center border-l border-[#c8c8c8] pl-[4px]">{m}</div>
              </div>
            ))}
          </div>
          <VBar track="h-full" thumb="h-[26px]" />
        </div>
        <div className="flex h-[22px] w-[1895px] border-t border-black pl-[2px] text-[11.5px] leading-none text-[#808080]">
          {tabs.map(([t, w]) => (
            <div key={t} className={`mt-[3px] flex h-[15px] items-center justify-center border-r border-[#999] ${w}`}>{t}</div>
          ))}
          <div className="flex h-[21px] w-[58px] items-center justify-center border-l border-r-2 border-b-2 border-black bg-white text-black">Journal</div>
        </div>
      </div>
      <div className="absolute top-[154px] left-[1598px] font-['Noto_Sans',sans-serif] text-[#bdbdbd]">
        <div className="text-[19.5px] leading-[26px]">Activate Windows</div>
        <div className="text-[14.2px] leading-[20px]">Go to Settings to activate Windows.</div>
      </div>
    </section>
  );
}

function StatusBar() {
  const c = "flex h-[18px] items-center border-l border-[#aaa] pl-[5px]";
  return (
    <div className="flex h-[24px] items-center border-t-2 border-[#c0c0c0] bg-[#f0f0f0] text-[11px] leading-none text-[#111]">
      <div className="w-[1207px] pl-[2px] text-[11.5px]">For Help, press F1</div>
      <div className={`${c} w-[116px]`}>Default</div>
      <div className={`${c} w-[102px]`}>2024.01.15 19:00</div>
      <div className={`${c} w-[71px]`}>O: 1.27312</div>
      <div className={`${c} w-[71px]`}>H: 1.27314</div>
      <div className={`${c} w-[68px]`}>L: 1.27252</div>
      <div className={`${c} w-[70px]`}>C: 1.27256</div>
      <div className={`${c} w-[67px]`}>V: 720</div>
      <div className={`${c} gap-[4px]`}>
        <svg width={23} height={14} viewBox="0 0 23 14">
          {Array.from({ length: 8 }, (_, i) => (
            <g key={i}>
              <rect x={i * 3} y={6 - i * 0.6} width="2" height={3 + i * 0.6} fill="#7a8a12" />
              <rect x={i * 3} y={9} width="2" height="5" fill="#1a6d8a" />
            </g>
          ))}
        </svg>
        1029/2 kb
      </div>
    </div>
  );
}

const T = {
  Win: () => <svg width={18} height={18} viewBox="0 0 18 18"><path d="M0 2.8L7.3 1.7V8.6H0zM8.3 1.6L18 0V8.6H8.3zM0 9.6H7.3V16.3L0 15.2zM8.3 9.6H18V18L8.3 16.4z" fill="#fff" /></svg>,
  Mag: () => <svg width={17} height={17} viewBox="0 0 17 17"><circle cx="10.5" cy="6.5" r="5.5" fill="none" stroke="#222" strokeWidth="1.2" /><path d="M6.5 10.5L1 16" stroke="#222" strokeWidth="1.4" /></svg>,
  Case: () => <svg width={30} height={30} viewBox="0 0 30 30"><path d="M10 7V3h10v4" fill="none" stroke="#3a3a3a" strokeWidth="2" /><rect x="0" y="6" width="30" height="23" rx="2" fill="#c97a14" /><rect x="0" y="6" width="30" height="11" rx="2" fill="#e08f1c" /><rect x="12.5" y="14" width="5" height="5" fill="#ffd34d" /></svg>,
  Task: () => <svg width={18} height={18} viewBox="0 0 18 18" fill="none" stroke="#fff"><path d="M1 1.5h11M1 16.5h11" strokeWidth="1.4" /><rect x="2.5" y="4.5" width="8" height="9" /><path d="M15.5 4v3M15.5 10v4" strokeWidth="2" /></svg>,
  Chrome: ({ s = 24 }: { s?: number }) => <svg width={s} height={s} viewBox="0 0 24 24"><circle cx="12" cy="12" r="11" fill="#db4437" /><path d="M21.53 6.5A11 11 0 0 1 12 23l4.76-8.25A5.5 5.5 0 0 0 12 6.5z" fill="#fbbc05" /><path d="M12 23A11 11 0 0 1 2.47 6.5l4.77 8.25a5.5 5.5 0 0 0 9.52 0z" fill="#34a853" /><circle cx="12" cy="12" r="5.4" fill="#fff" /><circle cx="12" cy="12" r="4.2" fill="#4285f4" /></svg>,
  Store: () => <svg width={24} height={24} viewBox="0 0 24 24"><path d="M7 7V4a2 2 0 0 1 2-2h6a2 2 0 0 1 2 2v3" fill="none" stroke="#4aa8e8" strokeWidth="2" /><rect x="1" y="6" width="22" height="17" rx="2" fill="#f0f0f0" /><rect x="7" y="10" width="4.5" height="4.5" fill="#f25022" /><rect x="12.5" y="10" width="4.5" height="4.5" fill="#7fba00" /><rect x="7" y="15.5" width="4.5" height="4.5" fill="#00a4ef" /><rect x="12.5" y="15.5" width="4.5" height="4.5" fill="#ffb900" /></svg>,
  Mail: () => <svg width={24} height={24} viewBox="0 0 24 24"><path d="M0 9L12 1l12 8v13H0z" fill="#0f6cbd" /><path d="M0 9v13h24V9L12 17z" fill="#47b3f0" /><path d="M3 8.5L12 14l9-5.5V7H3z" fill="#fff" /></svg>,
  Brave: () => <svg width={22} height={26} viewBox="0 0 22 26"><path d="M4 1h14l3 5-1 10-9 9-9-9L1 6z" fill="#f1481f" /><path d="M5 9l4 1 2-1 2 1 4-1-2 5-2 2 1 3-3 2-3-2 1-3-2-2z" fill="#fff" /></svg>,
  Any: () => <div className="flex h-[24px] w-[24px] items-center justify-center bg-[#ef443b]"><svg width={14} height={14} viewBox="0 0 14 14"><path d="M6 2l5 5-5 5-5-5z" fill="#fff" /><path d="M10 3l4 4-4 4-1.4-1.4L11.2 7 8.6 4.4z" fill="#fff" /></svg></div>,
  Note: () => <svg width={24} height={28} viewBox="0 0 24 28"><rect x="1" y="1" width="22" height="26" rx="6" fill="#071a2b" /><rect x="6" y="6" width="12" height="15" fill="#fff" /><path d="M8 9h8M8 12h5v6M12 15h4" stroke="#071a2b" strokeWidth="1.5" fill="none" /></svg>,
  Comp: () => <svg width={26} height={28} viewBox="0 0 26 28"><rect x="1" y="1" width="24" height="16" fill="#c9d6e6" stroke="#68819c" /><rect x="3" y="5" width="20" height="9" fill="#2e70c2" /><path d="M5 7h16M5 10h16" stroke="#cfe3fa" strokeDasharray="2 1" /><ellipse cx="13" cy="24" rx="8" ry="3.5" fill="#c9c9c9" /><rect x="11" y="17" width="4" height="5" fill="#a9b5c2" /></svg>,
  Excel: () => <svg width={25} height={24} viewBox="0 0 25 24"><rect x="6" y="0" width="19" height="24" rx="1" fill="#21a366" /><rect x="6" y="12" width="19" height="12" fill="#107c41" /><rect x="15" y="0" width="10" height="12" fill="#33c481" /><rect x="0" y="5" width="14" height="14" rx="1" fill="#185c37" /><path d="M3.5 8l7 8M10.5 8l-7 8" stroke="#fff" strokeWidth="1.7" /></svg>,
  Folder: () => <svg width={24} height={24} viewBox="0 0 24 24"><path d="M1 3h9l2 3h11v16H1z" fill="#f8cf5b" /><path d="M1 3h9l2 3H1z" fill="#e5a82a" /><path d="M7 22v-7l5-4 5 4v7z" fill="#1f87d9" /><rect x="10" y="17" width="4" height="5" fill="#f8cf5b" /></svg>,
  Edge: () => <svg width={24} height={24} viewBox="0 0 24 24"><circle cx="12" cy="12" r="11.5" fill="#0c59a4" /><path d="M1 10C3 3 10 .5 12 .5c6 0 11 4 11.5 10.5 0 4-4 5-6.5 3.5 1.5-2 1-6-4-7-5-1-9 0-12 2.5z" fill="#35c1a0" /><path d="M6 16c0 4 4 7 9 7-3-1-5-4-4-8 .5-2 3-4 5-4-5-2-10 1-10 5z" fill="#1ba1e2" /></svg>,
  Notes: () => <svg width={22} height={26} viewBox="0 0 22 26"><path d="M5 1h16l-4 24H1z" fill="#dfeaf0" stroke="#8aa" strokeWidth=".6" /><path d="M2 25L5 8l6 17z" fill="#5ea5ad" /><path d="M5 1h16l-1 4H4z" fill="#f3f3f3" /></svg>,
  Paint: () => <svg width={26} height={26} viewBox="0 0 26 26"><ellipse cx="11" cy="15" rx="10" ry="9" fill="#d8d8e4" stroke="#8890a0" strokeWidth=".6" /><circle cx="6" cy="11" r="2" fill="#2e8ede" /><circle cx="5" cy="17" r="2" fill="#e34a4a" /><circle cx="11" cy="20" r="2" fill="#44b044" /><circle cx="11" cy="9" r="2" fill="#f0c030" /><path d="M14 20L23 2" stroke="#b5772a" strokeWidth="2.5" /><path d="M21 1l3 1.5-2 3-2.5-1.5z" fill="#d9d0c0" /></svg>,
  OneDrive: () => <svg width={26} height={26} viewBox="0 0 26 26"><path d="M3 1h6l3 3v19H3z" fill="#f5d77f" stroke="#c9a341" strokeWidth=".6" /><path d="M9 24a4 4 0 0 1 0-8 6 6 0 0 1 11-1 4.5 4.5 0 0 1 1 9z" fill="#1c7cd5" /></svg>,
};

const Slot = ({ children, line, bg }: { children: React.ReactNode; line?: string; bg?: string }) => (
  <div className={`relative flex h-full w-[49px] items-center justify-center ${bg ?? ""}`}>
    {children}
    {line && <div className={`absolute inset-x-[4px] bottom-0 h-[2px] ${line}`} />}
  </div>
);
const ub = "bg-[#76b9ed]";

function Taskbar() {
  return (
    <div className="flex h-[40px] items-center bg-[#1e303f] font-['Liberation_Sans',sans-serif] text-white">
      <div className="flex w-[48px] justify-center"><T.Win /></div>
      <div className="flex h-full w-[288px] items-center border border-[#8a9199] bg-[#f0f0f0] pl-[11px] text-[#333]">
        <T.Mag />
        <span className="ml-[10px] text-[14.5px] leading-none">Type here to search</span>
        <div className="ml-[46px] flex h-[35px] w-[71px] items-center justify-center rounded-[4px] bg-[#e1e1e1]"><T.Case /></div>
      </div>
      <div className="flex h-full pl-[1px]">
        <Slot><T.Task /></Slot>
        <Slot><T.Chrome s={24} /></Slot>
        <Slot><T.Store /></Slot>
        <Slot><T.Mail /></Slot>
        <Slot><T.Brave /></Slot>
        <Slot><T.Any /></Slot>
        <Slot><T.Note /></Slot>
        <Slot line={ub}><T.Comp /></Slot>
        <Slot line={ub}><T.Excel /></Slot>
        <Slot line={ub} bg="bg-[#4d5f6b]">
          <div className="flex h-[24px] w-[24px] items-center justify-center bg-[#ffde02] text-[5px] font-bold leading-none text-[#333]">exness</div>
        </Slot>
        <Slot line={ub}><T.Folder /></Slot>
        <Slot line={ub}>
          <div className="relative">
            <T.Chrome s={24} />
            <div className="absolute -right-[3px] -bottom-[2px] flex h-[15px] w-[15px] items-center justify-center rounded-full bg-[#0a8a96] text-[8px] leading-none">A</div>
          </div>
        </Slot>
        <Slot line={ub}><T.Edge /></Slot>
        <Slot line={ub}><T.Notes /></Slot>
        <Slot line="bg-[#ff7a00]" bg="bg-[#a4652f]">
          <div className="relative">
            <svg width={22} height={22} viewBox="0 0 22 22"><circle cx="11" cy="11" r="11" fill="#2ca5e0" /><path d="M4 11l13-5-2 11-4-3-2 3-1-5z" fill="#fff" /></svg>
            <div className="absolute -right-[4px] -bottom-[3px] bg-[#e8343c] px-[1px] text-[9px] leading-[12px]">778</div>
          </div>
        </Slot>
        <Slot><T.Paint /></Slot>
        <Slot line={ub}><T.OneDrive /></Slot>
      </div>
      <div className="ml-auto flex h-full items-center text-[12px] leading-none">
        <svg width={22} height={24} viewBox="0 0 22 24">
          <circle cx="11" cy="12" r="10.5" fill="#f6a21d" />
          <path d="M1 7h14M0 11h18M3 15h11M4 19h13" stroke="#fff3d0" strokeWidth="1.3" />
        </svg>
        <span className="ml-[9px] text-[13px]">34°C</span>
        <span className="ml-[9px] text-[13px]">Haze</span>
        <div className="ml-[25px] w-[12px]"><svg width={12} height={7} viewBox="0 0 12 7"><path d="M1 6l5-5 5 5" stroke="#fff" fill="none" /></svg></div>
        <div className="ml-[12px]"><svg width={12} height={16} viewBox="0 0 12 16" fill="none" stroke="#fff"><rect x="1.5" y="3.5" width="8" height="9" rx="1" /><path d="M3 1h5M3 15h5M10 6l2-1v6l-2-1" /></svg></div>
        <div className="ml-[10px]"><svg width={16} height={14} viewBox="0 0 16 14" fill="none" stroke="#fff"><path d="M1 5h3l4-3.5v11L4 9H1zM10.5 4a4 4 0 0 1 0 6M12.5 2a7 7 0 0 1 0 10" /></svg></div>
        <div className="ml-[9px]"><svg width={14} height={14} viewBox="0 0 14 14" fill="none" stroke="#fff"><path d="M1 13a12 12 0 0 1 12-12M4 13a9 9 0 0 1 9-9M7 13a6 6 0 0 1 6-6" strokeDasharray="2 1" /><circle cx="12" cy="12" r="1.5" fill="#fff" /></svg></div>
        <span className="ml-[10px] w-[24px] text-[11px]">ENG</span>
        <div className="flex w-[80px] flex-col items-center gap-[7px] text-[11.5px]">
          <span>12:29</span>
          <span>09/04/2024</span>
        </div>
        <div className="relative flex w-[49px] justify-center">
          <svg width={18} height={16} viewBox="0 0 18 16"><path d="M0 0h18v12H8l-4 4v-4H0z" fill="#fff" /><path d="M3 3.5h12M3 6.5h12M3 9.5h8" stroke="#1e303f" /></svg>
          <div className="absolute top-[5px] left-[24px] flex h-[15px] w-[15px] items-center justify-center rounded-full border border-[#aaa] bg-[#2c3b47] text-[10px] leading-none">3</div>
        </div>
      </div>
    </div>
  );
}

const menus = [["File", "w-[36px]"], ["View", "w-[43px]"], ["Insert", "w-[47px]"], ["Charts", "w-[52px]"], ["Tools", "w-[45px]"], ["Window", "w-[62px]"], ["Help", "w-[40px]"]];

export default function App() {
  return (
    <div className="flex h-[1080px] w-[1920px] flex-col overflow-hidden bg-[#f0f0f0] font-['Liberation_Sans',sans-serif] text-black">
      <div className="flex h-[23px] items-center bg-white text-[12px] leading-none">
        <div className="ml-[2px] flex h-[14px] w-[16px] items-center justify-center bg-[#ffde02] text-[3px] font-bold text-[#333]">exness</div>
        <div className="ml-[5px] text-[11.5px]">69470231: Exness-Trial8 - Demo Account - Exness Technologies Ltd - [GBPUSD,H1 (visual)]</div>
        <div className="ml-auto flex pr-[4px]">
          <div className="flex w-[46px] justify-center"><svg width={10} height={10} viewBox="0 0 10 10"><path d="M0 5.5h10" stroke="#333" /></svg></div>
          <div className="flex w-[46px] justify-center"><svg width={10} height={10} viewBox="0 0 10 10" fill="none" stroke="#333"><rect x=".5" y="2.5" width="7" height="7" /><path d="M2.5 2.5v-2h7v7h-2" /></svg></div>
          <div className="flex w-[44px] justify-center"><svg width={10} height={10} viewBox="0 0 10 10"><path d="M0 0l10 10M10 0L0 10" stroke="#333" /></svg></div>
        </div>
      </div>
      <div className="flex h-[20px] items-center text-[12px] leading-none text-[#111]">
        <div className="flex w-[28px] justify-center pr-[3px]"><MT /></div>
        {menus.map(([m, w]) => <div key={m} className={w}>{m}</div>)}
        <div className="ml-auto flex items-center gap-[12px] pr-[9px]">
          <svg width={8} height={8} viewBox="0 0 8 8"><path d="M0 6h8" stroke="#888" /></svg>
          <svg width={8} height={8} viewBox="0 0 8 8" fill="none" stroke="#888"><rect x=".5" y="2" width="5" height="5" /><path d="M2 2V.5h5.5V6H6" /></svg>
          <svg width={8} height={8} viewBox="0 0 8 8"><path d="M0 0l8 8M8 0L0 8" stroke="#888" /></svg>
        </div>
      </div>
      <div className="relative">
        <Toolbar1 />
        <div className="absolute top-[5px] right-[7px] flex items-center gap-[11px]">
          <svg width={15} height={15} viewBox="0 0 15 15"><circle cx="9.5" cy="5.5" r="4" fill="#cfe3fa" stroke="#2f6fb5" strokeWidth="1.5" /><path d="M6.5 8.5L1 14" stroke="#2f6fb5" strokeWidth="2" /></svg>
          <div className="relative h-[19px] w-[20px]">
            <svg width={14} height={15} viewBox="0 0 14 15" className="absolute left-0 bottom-0"><path d="M1 14V6a6 5 0 0 1 12 0v8z" fill="#c8ccd2" stroke="#777" /></svg>
            <div className="absolute top-0 right-0 flex h-[14px] w-[14px] items-center justify-center rounded-full bg-[#e8262b] text-[10px] font-bold leading-none text-white">1</div>
          </div>
        </div>
      </div>
      <Toolbar2 />
      <div className="h-[2px]" />
      <div className="flex h-[690px]">
        <div className="w-[320px]">
          <MarketWatch />
          <Navigator />
        </div>
        <div className="w-[2px] bg-[#777]" />
        <div className="flex w-[1598px] flex-col">
          <Chart />
          <ChartTabs />
        </div>
      </div>
      <Tester />
      <StatusBar />
      <Taskbar />
    </div>
  );
}
